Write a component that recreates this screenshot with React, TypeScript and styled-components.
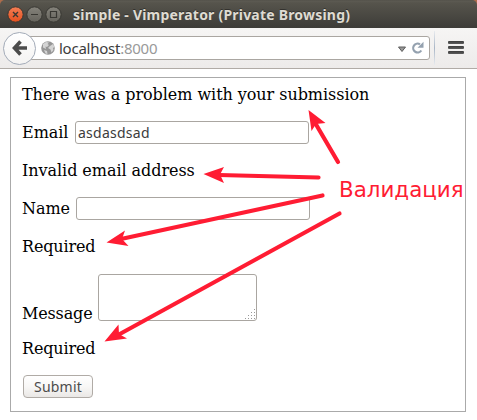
import React from 'react';
import styled, { createGlobalStyle } from 'styled-components';

const GlobalStyle = createGlobalStyle`
  * { box-sizing: border-box; }
  body { margin: 0; background: #fff; overflow: hidden; }
`;

const Window = styled.div`
  position: relative;
  width: 477px;
  height: 420px;
  background: #fff;
  overflow: hidden;
`;

const TitleFrame = styled.div`
  height: 28px;
  background: #ad6c4b;
`;

const TitleBar = styled.header`
  display: flex;
  align-items: center;
  height: 28px;
  padding: 1px 0 0 7px;
  border-radius: 5px 5px 0 0;
  background: linear-gradient(#504e47 0, #5d5b53 1px, #56544c 3px, #3e3d39 27px);
`;

const WindowButtons = styled.svg`
  flex: none;
  width: 56px;
  height: 18px;
`;

const Title = styled.span<{ $spacing: number }>`
  margin-left: 10px;
  color: #dfdbd2;
  font: bold 14px/20px 'Noto Sans', 'Open Sans', sans-serif;
  letter-spacing: ${(p) => p.$spacing}px;
  white-space: nowrap;
  text-shadow: 0 -1px 0 #33322e;
`;

const Toolbar = styled.nav`
  display: flex;
  align-items: center;
  height: 41px;
  padding: 0 13px 0 3px;
  border-bottom: 1px solid #b0aba6;
  background: linear-gradient(#f6f5f4, #edebea);
`;

const BackButton = styled.button`
  display: flex;
  flex: none;
  z-index: 1;
  width: 33px;
  height: 33px;
  padding: 0;
  border: 1px solid #a3abb8;
  border-radius: 50%;
  background: linear-gradient(#fff, #f4f3f2);
  align-items: center;
  justify-content: center;
`;

const AddressBar = styled.div`
  display: flex;
  align-items: center;
  flex: 1;
  height: 24px;
  margin-left: -8px;
  padding: 0 5px 0 12px;
  border: 1px solid #aaa6a1;
  border-radius: 0 3px 3px 0;
  background: #fff;
`;

const Address = styled.span<{ $spacing: number }>`
  flex: 1;
  margin-left: 4px;
  color: #3c3c3c;
  font: 15px/22px 'Noto Sans', 'Open Sans', sans-serif;
  letter-spacing: ${(p) => p.$spacing}px;
`;

const Port = styled.span`
  color: #999;
`;

const Divider = styled.div`
  width: 1px;
  height: 34px;
  margin: 0 13px 0 4px;
  background: linear-gradient(#e8ebef, #a9b6c6 50%, #e8ebef);
`;

const MenuButton = styled.div`
  display: flex;
  flex-direction: column;
  gap: 2px;
  width: 16px;
  margin-bottom: 1px;
`;

const MenuBar = styled.i`
  height: 3px;
  border-radius: 1px;
  background: linear-gradient(#3c3c3c, #5c5c5c);
`;

const FormPanel = styled.form`
  width: 456px;
  height: 335px;
  margin: 8px 0 0 10px;
  padding: 4px 11px;
  border: 1px solid #aaa;
  color: #000;
  font: 16px/24px 'DejaVu Serif', serif;
`;

const Row = styled.div<{ $top?: number; $height?: number }>`
  display: flex;
  align-items: flex-end;
  height: ${(p) => p.$height ?? 24}px;
  margin-top: ${(p) => p.$top ?? 14}px;
`;

const Copy = styled.span<{ $width?: number; $drop?: number; $spacing?: number }>`
  flex: none;
  width: ${(p) => (p.$width ? `${p.$width}px` : 'auto')};
  margin-bottom: ${(p) => -(p.$drop ?? 1)}px;
  letter-spacing: ${(p) => p.$spacing ?? -0.05}px;
  white-space: nowrap;
`;

const TextField = styled.input`
  width: 234px;
  height: 23px;
  padding: 0 2px;
  border: 1px solid #aaa6a1;
  border-radius: 3px;
  background: #fff;
  color: #3c3c3c;
  outline: none;
  font: 14px/21px 'Noto Sans', 'Open Sans', sans-serif;
  letter-spacing: 0.25px;
`;

const MessageBox = styled.div`
  display: flex;
  align-items: flex-end;
  justify-content: flex-end;
  width: 159px;
  height: 47px;
  padding: 1px;
  border: 1px solid #aaa6a1;
  border-radius: 3px;
  background: #fff;
`;

const SubmitButton = styled.button`
  width: 70px;
  height: 23px;
  margin-left: 1px;
  padding: 0;
  border: 1px solid #b0aba6;
  border-radius: 4px;
  background: linear-gradient(#fff, #f8f7f6 50%, #eae8e6);
  color: #4c4c4c;
  font: 14px/20px 'Noto Sans', 'Open Sans', sans-serif;
  letter-spacing: 0.2px;
`;

const Annotations = styled.svg`
  position: absolute;
  inset: 0;
  width: 477px;
  height: 420px;
  pointer-events: none;
`;

const Callout = styled.span`
  position: absolute;
  left: 339px;
  top: 177px;
  color: #ff1c33;
  font: 21.4px/26px 'DejaVu Sans', sans-serif;
  white-space: nowrap;
`;

const arrows = [
  { line: 'M338 162 314 121', head: '308.5,110 325.5,123 316,124 311.5,131' },
  { line: 'M318.5 177.5 219 175', head: '203.5,174 224,167 220,174.5 224,183' },
  { line: 'M322.5 195.5 121 239', head: '106.5,242.5 125,230.5 122,239 128.5,246' },
  { line: 'M339.5 213.5 118 335', head: '104.5,341.5 118.5,324.5 119,334 127,338.5' },
];

const gripDots = [[9, 0], [6, 3], [9, 3], [3, 6], [6, 6], [9, 6], [0, 9], [3, 9], [6, 9], [9, 9]];

export default function App() {
  return (
    <Window>
      <GlobalStyle />
      <TitleFrame>
        <TitleBar>
          <WindowButtons viewBox="0 0 56 18">
            <defs>
              <linearGradient id="close" x2="0" y2="1">
                <stop stopColor="#f37e55" />
                <stop offset="1" stopColor="#e5501e" />
              </linearGradient>
              <linearGradient id="control" x2="0" y2="1">
                <stop stopColor="#85837b" />
                <stop offset="1" stopColor="#65635c" />
              </linearGradient>
            </defs>
            <g stroke="#383732">
              <circle cx="8.5" cy="8.5" r="7.7" fill="url(#close)" />
              <circle cx="27.5" cy="8.5" r="7.7" fill="url(#control)" />
              <circle cx="46.5" cy="8.5" r="7.7" fill="url(#control)" />
              <path d="m6 6 5 5m0-5-5 5" strokeWidth="1.4" />
              <path d="M24 8.5h7M43.5 5.5h6v6h-6z" fill="none" strokeWidth="1.2" />
            </g>
          </WindowButtons>
          <Title $spacing={0.21}>simple - Vimperator (Private Browsing)</Title>
        </TitleBar>
      </TitleFrame>
      <Toolbar>
        <BackButton type="button" aria-label="Back">
          <svg width="16" height="16" viewBox="0 0 16 16">
            <path d="M8.5 1.5 2.5 8l6 6.5M3 8h12" fill="none" stroke="#4c4c4c" strokeWidth="3.6" />
          </svg>
        </BackButton>
        <AddressBar>
          <svg width="14" height="14" viewBox="0 0 14 14">
            <circle cx="7" cy="7" r="6.8" fill="#969696" />
            <path d="M2 3 5 1l3 .5L6.5 3 8 4 6 6 4.5 5.5 5 8 2 6.5zM9 5l3-2 1.5 3-1.5 1 .5 2-2 2.5-1-3L7 7zM3 9l3 1 .5 3-2-.5z" fill="#d4d4d4" />
          </svg>
          <Address $spacing={-0.25}>localhost<Port>:8000</Port></Address>
          <svg width="30" height="14" viewBox="0 0 30 14">
            <path d="M4.5 6h7L8 10.5z" fill="#999" stroke="#5c5c5c" />
            <path d="M26 3.4A4.4 4.4 0 1 0 27.300 9.5" fill="none" stroke="#94a1af" strokeWidth="2.2" />
            <path d="M29.5 .8v6h-6z" fill="#94a1af" />
          </svg>
        </AddressBar>
        <Divider />
        <MenuButton><MenuBar /><MenuBar /><MenuBar /></MenuButton>
      </Toolbar>
      <FormPanel>
        <Row $top={0}><Copy>There was a problem with your submission</Copy></Row>
        <Row>
          <Copy as="label" $width={53}>Email</Copy>
          <TextField defaultValue="asdasdsad" />
        </Row>
        <Row><Copy>Invalid email address</Copy></Row>
        <Row>
          <Copy as="label" $width={54}>Name</Copy>
          <TextField />
        </Row>
        <Row><Copy $spacing={-0.15}>Required</Copy></Row>
        <Row $top={16} $height={47}>
          <Copy as="label" $width={76} $drop={5} $spacing={-0.15}>Message</Copy>
          <MessageBox>
            <svg width="10" height="10" viewBox="0 0 10 10">
              {gripDots.map(([x, y]) => (
                <rect key={`${x}-${y}`} x={x} y={y} width="1" height="1" fill="#999" />
              ))}
            </svg>
          </MessageBox>
        </Row>
        <Row $top={15}><Copy $spacing={-0.15}>Required</Copy></Row>
        <Row $top={15} $height={23}><SubmitButton type="button">Submit</SubmitButton></Row>
      </FormPanel>
      <Annotations viewBox="0 0 477 420">
        {arrows.map(({ line, head }) => (
          <g key={head} fill="#ff1c33" stroke="#ff1c33">
            <path d={line} strokeWidth="4.2" strokeLinecap="round" />
            <polygon points={head} stroke="none" />
          </g>
        ))}
      </Annotations>
      <Callout>Валидация</Callout>
    </Window>
  );
}
